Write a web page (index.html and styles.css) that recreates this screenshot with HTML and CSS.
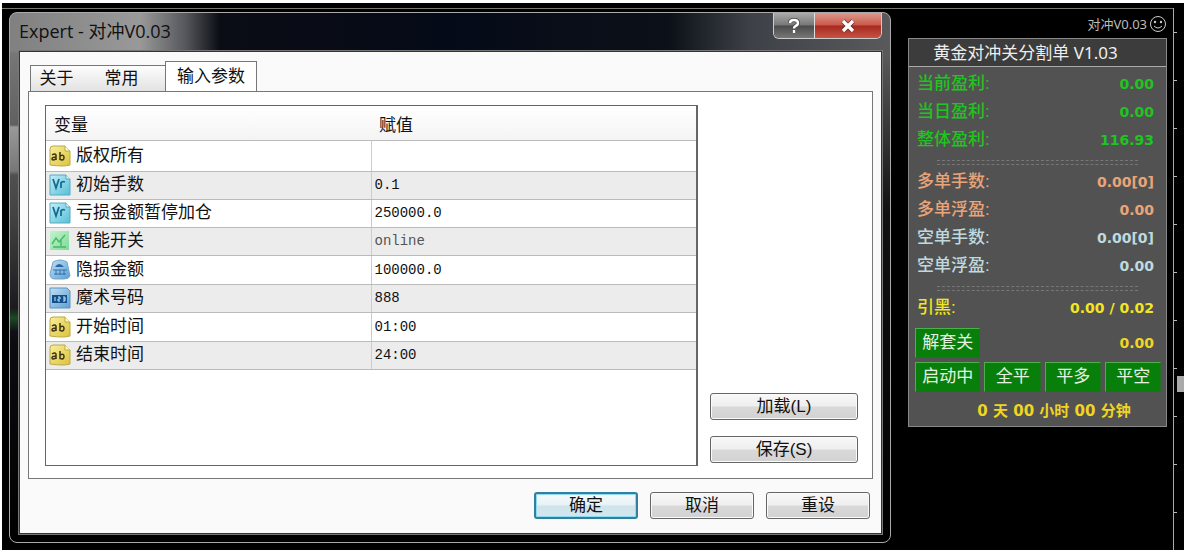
FILE: index.html
```html
<!DOCTYPE html>
<html lang="zh-CN">
<head>
<meta charset="utf-8">
<title>Expert - 对冲V0.03</title>
<link rel="stylesheet" href="styles.css">
</head>
<body>
<svg class="defs" aria-hidden="true">
  <defs>
    <linearGradient id="gy" x1="0" y1="0" x2="1" y2="1"><stop offset="0" stop-color="#f8ef9a"/><stop offset="1" stop-color="#dcc23c"/></linearGradient>
    <linearGradient id="gc" x1="0" y1="0" x2="1" y2="1"><stop offset="0" stop-color="#c4eef8"/><stop offset="1" stop-color="#55bfd8"/></linearGradient>
    <linearGradient id="gg" x1="0" y1="0" x2="1" y2="1"><stop offset="0" stop-color="#c3f3cd"/><stop offset="1" stop-color="#7ddb97"/></linearGradient>
    <linearGradient id="gb" x1="0" y1="0" x2="1" y2="1"><stop offset="0" stop-color="#c2dff5"/><stop offset="1" stop-color="#5c9fd4"/></linearGradient>
    <symbol id="i-ab" viewBox="0 0 22 22"><path d="M1 4Q1 1 4 1H16L21 6V20Q15 22 1 20Z" fill="url(#gy)" stroke="#bda843"/><path d="M16 1V6H21" fill="#fffbd0" stroke="#bda843"/><path d="M3 10Q6 8 7 10V15M7 12Q3 12 3 14T7 14M11 7V15M11 11Q15 9 15 12.500T11 14.500" fill="none" stroke="#3d3513" stroke-width="1.500"/></symbol>
    <symbol id="i-va" viewBox="0 0 22 22"><path d="M1 1H17L21 5V21H1Z" fill="url(#gc)" stroke="#57aabf"/><path d="M17 1V5H21" fill="#e4fafd" stroke="#57aabf"/><path d="M4 5L7 14L10 5M12 14V8M12 9Q13 7 16 8" fill="none" stroke="#146d91" stroke-width="1.800"/></symbol>
    <symbol id="i-chart" viewBox="0 0 22 22"><path d="M1 1H20V20H1Z" fill="url(#gg)"/><path d="M3 14L7 8L10 12L16 5M4 17H17M12 9V16" fill="none" stroke="#49b86a" stroke-width="1.400"/></symbol>
    <symbol id="i-disc" viewBox="0 0 22 22"><path d="M4 3Q11 -1 18 3L21 17Q20 20 15 20H6Q1 20 1 15Z" fill="url(#gb)" stroke="#6fa5cf"/><path d="M6 8Q10 2 15 8Z" fill="#28689f"/><path d="M4 11H18M5 15H17M7 11V16M11 11V16M15 11V16" stroke="#3274ab" fill="none"/></symbol>
    <symbol id="i-num" viewBox="0 0 22 22"><path d="M1 1H18L21 4V21H1Z" fill="url(#gb)" stroke="#5c94c0"/><path d="M3 8H18V16H3Z" fill="#14508c"/><path d="M6 10V14M9 10H11V12H9V14H11M14 10H16V14H14M14 12H16" fill="none" stroke="#c7e4fa"/></symbol>
  </defs>
</svg>
<main class="chart">
  <section class="dialog" aria-label="Expert">
    <header class="titlebar">
      <h1 class="title">Expert - 对冲V0.03</h1>
      <div class="caption">
        <button class="cap help" type="button" aria-label="帮助"><svg viewBox="0 0 14 16" width="14" height="16"><path d="M3 5Q3 2 7 2T11 5Q11 7 8.500 8Q7 9 7 10.500M7 12V15" fill="none" stroke="#444" stroke-width="4"/><path d="M3 5Q3 2 7 2T11 5Q11 7 8.500 8Q7 9 7 10.500M7 12V15" fill="none" stroke="#fff" stroke-width="2.500"/></svg></button>
        <button class="cap close" type="button" aria-label="关闭"><svg viewBox="0 0 16 14" width="16" height="14"><path d="M3 2L13 12M13 2L3 12" fill="none" stroke="#6b2a22" stroke-width="5"/><path d="M3 2L13 12M13 2L3 12" fill="none" stroke="#fff" stroke-width="3.400"/></svg></button>
      </div>
    </header>
    <div class="client">
      <nav class="tabs">
        <button class="tab first" type="button">关于</button>
        <button class="tab" type="button">常用</button>
        <button class="tab active" type="button">输入参数</button>
      </nav>
      <div class="page">
        <div class="list">
          <table class="params">
            <thead><tr><th class="name">变量</th><th>赋值</th></tr></thead>
            <tbody>
              <tr><td><span class="cell"><svg class="ico"><use href="#i-ab"/></svg>版权所有</span></td><td></td></tr>
              <tr><td><span class="cell"><svg class="ico"><use href="#i-va"/></svg>初始手数</span></td><td>0.1</td></tr>
              <tr><td><span class="cell"><svg class="ico"><use href="#i-va"/></svg>亏损金额暂停加仓</span></td><td>250000.0</td></tr>
              <tr><td><span class="cell"><svg class="ico"><use href="#i-chart"/></svg>智能开关</span></td><td class="dim">online</td></tr>
              <tr><td><span class="cell"><svg class="ico"><use href="#i-disc"/></svg>隐损金额</span></td><td>100000.0</td></tr>
              <tr><td><span class="cell"><svg class="ico"><use href="#i-num"/></svg>魔术号码</span></td><td>888</td></tr>
              <tr><td><span class="cell"><svg class="ico"><use href="#i-ab"/></svg>开始时间</span></td><td>01:00</td></tr>
              <tr><td><span class="cell"><svg class="ico"><use href="#i-ab"/></svg>结束时间</span></td><td>24:00</td></tr>
            </tbody>
          </table>
        </div>
        <div class="side">
          <button class="btn" type="button">加载(L)</button>
          <button class="btn" type="button">保存(S)</button>
        </div>
      </div>
      <footer class="actions">
        <button class="btn ok" type="button">确定</button>
        <button class="btn" type="button">取消</button>
        <button class="btn" type="button">重设</button>
      </footer>
    </div>
  </section>
  <aside class="expert">
    <div class="badge">对冲V0.03<svg viewBox="0 0 18 18" width="18" height="18"><g fill="none" stroke="#ccc"><circle cx="9" cy="9" r="7.500"/><path d="M5 11Q9 15 13 11"/></g><circle cx="6" cy="7" r="1.200" fill="#ccc"/><circle cx="12" cy="7" r="1.200" fill="#ccc"/></svg></div>
    <div class="panel">
      <h2 class="phead">黄金对冲关分割单 V1.03</h2>
      <dl class="stats">
        <div class="row green"><dt>当前盈利:</dt><dd>0.00</dd></div>
        <div class="row green"><dt>当日盈利:</dt><dd>0.00</dd></div>
        <div class="row green"><dt>整体盈利:</dt><dd>116.93</dd></div>
      </dl>
      <div class="rule"></div>
      <dl class="stats">
        <div class="row orange"><dt>多单手数:</dt><dd>0.00[0]</dd></div>
        <div class="row orange"><dt>多单浮盈:</dt><dd>0.00</dd></div>
        <div class="row pale"><dt>空单手数:</dt><dd>0.00[0]</dd></div>
        <div class="row pale"><dt>空单浮盈:</dt><dd>0.00</dd></div>
      </dl>
      <div class="rule"></div>
      <dl class="stats">
        <div class="row yellow"><dt>引黑:</dt><dd>0.00 / 0.02</dd></div>
      </dl>
      <div class="keys">
        <button class="key" type="button">解套关</button>
        <span class="sum">0.00</span>
        <button class="key" type="button">启动中</button>
        <button class="key" type="button">全平</button>
        <button class="key" type="button">平多</button>
        <button class="key" type="button">平空</button>
      </div>
      <p class="timer">0 天 00 小时 00 分钟</p>
    </div>
  </aside>
  <div class="scale"><span class="price"></span></div>
</main>
</body>
</html>
```
FILE: styles.css
```css
* { box-sizing: border-box; }
body {
  margin: 0;
  padding: 3px 3px 3px 2px;
  min-height: 100vh;
  display: flex;
  background: #fff;
  font-family: "Liberation Sans", "Noto Sans CJK SC", sans-serif;
  font-size: 17px;
  line-height: 20px;
  color: #111;
}
button { font: inherit; color: inherit; padding: 0; }
h1, h2, p, dl, dd { margin: 0; font-weight: normal; }
.defs { position: absolute; width: 0; height: 0; }

.chart {
  flex: 1;
  display: flex;
  padding-left: 7px;
  background: linear-gradient(#000 5px, #77776f 5px, #77776f 6px, #000 6px);
}

/* dialog window */
.dialog {
  flex: 1;
  min-width: 0;
  display: flex;
  flex-direction: column;
  margin: 9px 0 7px;
  padding: 0 8px 8px 9px;
  border: 1px solid #aaa;
  border-radius: 8px;
  background:
    linear-gradient(#0000 112px, #999 114px, #777 158px, #0000 162px, #0000 295px, #1b4a26 305px, #0000 318px) left / 9px 100% no-repeat,
    linear-gradient(#0000 38px, #5a5a5a 40px, #111 200px, #000) right / 8px 100% no-repeat,
    linear-gradient(#0000 38px, #777 40px, #444 200px, #0c0c10 330px, #000) left / 9px 100% no-repeat,
    linear-gradient(90deg, #808080 0, #999 130px, #55585c 175px, #0b0d15 210px, #050a18 50%, #0c1118 75%, #3d4147 84%, #5a5a5c 100%) top / 100% 40px no-repeat,
    #000;
}
.titlebar { height: 38px; display: flex; justify-content: space-between; }
.title {
  padding-top: 8px;
  font-family: "Open Sans", "Noto Sans CJK SC", sans-serif;
  font-size: 18px;
  color: #111;
}
.caption {
  height: 26px;
  display: flex;
  border: 1px solid #ccc;
  border-top: 0;
  border-radius: 0 0 6px 6px;
  overflow: hidden;
}
.cap { display: grid; place-items: center; border: 0; }
.help { width: 41px; border-right: 1px solid #ddd; background: linear-gradient(#aaa, #777 48%, #4b4b4b 52%, #777); }
.close { width: 66px; background: linear-gradient(#dc9a8e, #c9594b 48%, #a52a1d 52%, #c65343); }
.client {
  flex: 1;
  display: flex;
  flex-direction: column;
  padding: 9px 8px 14px;
  border: 1px solid #333;
  outline: 1px solid #777;
  background: #fafafa;
}

/* tabs */
.tabs { display: flex; align-items: flex-end; padding-left: 2px; height: 30px; }
.tab {
  width: 67px;
  height: 26px;
  border: 1px solid #777;
  border-width: 1px 0 0;
  background: linear-gradient(#fdfdfd, #e2e2e2);
}
.tab.first { border-left-width: 1px; width: 68px; padding-right: 16px; }
.tab:nth-child(2) { padding-right: 20px; }
.tab.active {
  width: 92px;
  height: 31px;
  margin-bottom: -1px;
  border-width: 1px 1px 0;
  background: #fff;
}
.page {
  flex: 1;
  display: flex;
  gap: 12px;
  padding: 13px 14px 12px 16px;
  border: 1px solid #777;
  background: #fff;
}
.list { flex: 1; border: 1px solid #666; border-right-width: 2px; }
.params { width: 100%; border-collapse: collapse; table-layout: fixed; }
.params th, .params td { border-bottom: 1px solid #bbb; padding: 0 4px; text-align: left; }
.params td { height: 28px; padding: 0 3px; font-family: "Liberation Mono", monospace; font-size: 14px; }
.params tbody tr:first-child td { height: 31px; }
.params tbody tr:nth-child(n+4):nth-child(odd) td { height: 29px; }
.params th { height: 34px; padding: 6px 8px 0; font-weight: normal; background: linear-gradient(#fff, #f4f4f4); }
.params .name { width: 50%; }
.params td + td { border-left: 1px solid #ccc; }
.params tbody tr:nth-child(even) { background: #ececec; }
.params .dim { color: #555; }
.cell { display: flex; align-items: center; gap: 5px; font-family: "Liberation Sans", "Noto Sans CJK SC", sans-serif; font-size: 17px; line-height: 20px; }
.ico { width: 22px; height: 22px; }

/* push buttons */
.btn {
  height: 27px;
  width: 104px;
  border: 1px solid #666;
  border-radius: 3px;
  background: linear-gradient(#f8f8f8, #eee 48%, #d9d9d9 52%, #d2d2d2);
  box-shadow: inset 0 0 0 1px #fafafa;
}
.ok { border: 2px solid #347f9f; background: linear-gradient(#f5fafc, #e8f2f6 48%, #cfe3eb 52%, #d4e7ee); box-shadow: inset 0 0 0 1px #8fdcf2; }
.side { width: 148px; display: flex; flex-direction: column; justify-content: flex-end; gap: 16px; padding-bottom: 3px; }
.side .btn { width: 100%; }
.actions { display: flex; justify-content: flex-end; gap: 12px; padding: 13px 3px 0 0; }

/* expert panel on the chart */
.expert { width: 259px; margin: 6px 6px 0 17px; }
.badge {
  display: flex;
  justify-content: flex-end;
  align-items: center;
  gap: 2px;
  height: 29px;
  font-family: "Noto Sans", "Noto Sans CJK SC", sans-serif;
  font-size: 13px;
  color: #bbb;
}
.panel { padding-bottom: 2px; border: 1px solid #888; background: #535253; }
.phead {
  height: 28px;
  padding-right: 24px;
  border-bottom: 1px solid #aaa;
  background: #3c3c3c;
  color: #eee;
  font-family: "Noto Sans", "Noto Sans CJK SC", sans-serif;
  font-size: 17px;
  line-height: 27px;
  text-align: center;
  white-space: nowrap;
}
.stats { padding: 3px 12px 0 8px; }
.row { display: flex; justify-content: space-between; align-items: center; height: 28px; }
.row dt { font-weight: 500; }
.row dd, .sum { font-family: "DejaVu Sans", sans-serif; font-size: 14px; font-weight: bold; }
.green { color: #20c420; }
.orange { color: #e9a577; }
.pale { color: #bfdadd; }
.yellow { color: #f0e622; }
.rule { height: 5px; margin: 6px 28px 0; border: 1px dashed #777; border-width: 1px 0; }
.keys {
  display: grid;
  grid-template-columns: 66fr 57fr 57fr 56fr;
  gap: 4px;
  padding: 6px 5px 0 6px;
}
.key {
  height: 30px;
  border: 1px solid #246d25;
  border-top-color: #4fae4c;
  border-left-color: #4fae4c;
  background: #087f0a;
  color: #e6f3e0;
}
.sum { grid-column: 2 / -1; justify-self: end; align-self: center; padding-right: 7px; color: #f0d522; }
.timer {
  height: 32px;
  padding: 4px 0 0 33px;
  color: #f0d522;
  text-align: center;
  font-family: "DejaVu Sans", "Noto Sans CJK SC", sans-serif;
  font-size: 15px;
  line-height: 30px;
  font-weight: bold;
  white-space: nowrap;
}

/* price scale */
.scale {
  width: 11px;
  margin-top: 5px;
  display: flex;
  flex-direction: column;
  align-items: flex-end;
  border-left: 1px solid #aaa;
  background: repeating-linear-gradient(#0000 0 24px, #bbb 24px 25px, #0000 25px 48px) left / 3px 100% no-repeat, #000;
}
.price { width: 7px; height: 16px; margin-top: 368px; background: #aaa; }
```
